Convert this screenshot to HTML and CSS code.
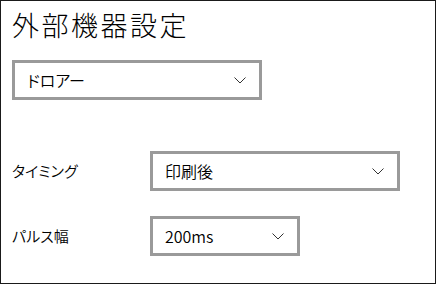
FILE: index.html
```html
<!DOCTYPE html>
<html lang="ja">
<head>
<meta charset="utf-8">
<link rel="stylesheet" href="styles.css">
</head>
<body>
<div class="window">
  <h1 class="title">外部機器設定</h1>
  <div class="select select-wide select-first">
    <span class="select-value">ドロアー</span>
    <svg class="chevron" width="12" height="7" viewBox="0 0 12 7"><polyline points="0.5,0.5 6,6 11.5,0.5" fill="none" stroke="#333" stroke-width="1"/></svg>
  </div>
  <div class="row row-timing">
    <span class="label">タイミング</span>
    <div class="select select-wide">
      <span class="select-value">印刷後</span>
      <svg class="chevron" width="12" height="7" viewBox="0 0 12 7"><polyline points="0.5,0.5 6,6 11.5,0.5" fill="none" stroke="#333" stroke-width="1"/></svg>
    </div>
  </div>
  <div class="row row-pulse">
    <span class="label">パルス幅</span>
    <div class="select select-narrow">
      <span class="select-value">200ms</span>
      <svg class="chevron" width="12" height="7" viewBox="0 0 12 7"><polyline points="0.5,0.5 6,6 11.5,0.5" fill="none" stroke="#333" stroke-width="1"/></svg>
    </div>
  </div>
</div>
</body>
</html>
```
FILE: styles.css
```css
html, body {
  margin: 0;
  padding: 0;
  background: #ffffff;
}
body {
  font-family: "Noto Sans CJK JP", "Noto Sans", sans-serif;
  font-feature-settings: "palt";
  font-weight: 350;
  color: #000;
}
.window {
  box-sizing: border-box;
  width: 436px;
  height: 284px;
  border: 1px solid #1a1a1a;
  padding: 11px 0 0 11px;
  display: flex;
  flex-direction: column;
  align-items: flex-start;
}
.title {
  margin: 0;
  font-size: 27px;
  line-height: 26px;
  font-weight: 300;
  letter-spacing: 2.5px;
}
.select {
  box-sizing: border-box;
  height: 40px;
  border: 3px solid #9a9a9a;
  display: flex;
  align-items: center;
  justify-content: space-between;
  padding: 0 13px 0 12px;
  background: #fff;
}
.select-wide { width: 250px; }
.select-narrow { width: 150px; }
.select-first { margin-top: 22px; }
.select-value {
  font-size: 16px;
  line-height: 20px;
}
.chevron { display: block; }
.row {
  display: flex;
  align-items: center;
}
.row-timing { margin-top: 51px; }
.row-pulse { margin-top: 25px; }
.label {
  width: 138px;
  font-size: 15px;
  line-height: 20px;
}
```
